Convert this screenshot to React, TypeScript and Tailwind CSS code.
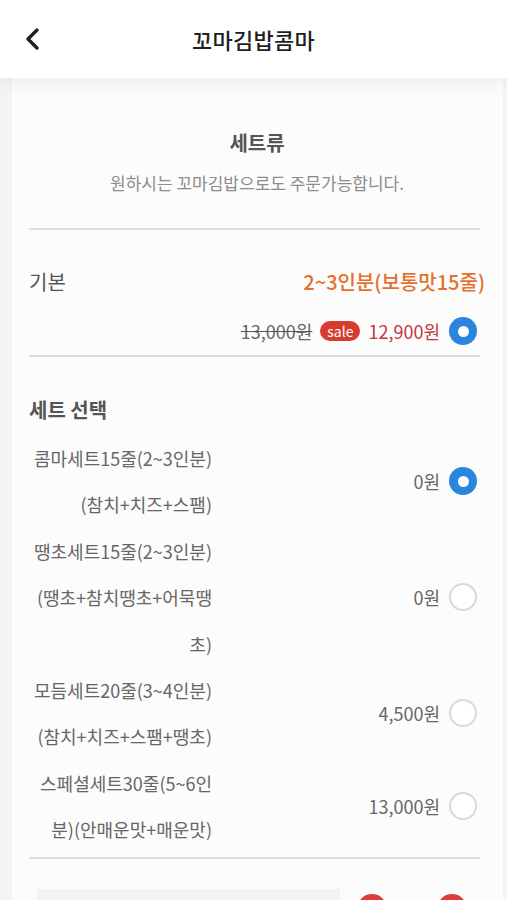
import React from "react";

type SetOption = {
  lines: string[];
  price: string;
  checked: boolean;
};

const SET_OPTIONS: SetOption[] = [
  { lines: ["콤마세트15줄(2~3인분)", "(참치+치즈+스팸)"], price: "0원", checked: true },
  { lines: ["땡초세트15줄(2~3인분)", "(땡초+참치땡초+어묵땡", "초)"], price: "0원", checked: false },
  { lines: ["모듬세트20줄(3~4인분)", "(참치+치즈+스팸+땡초)"], price: "4,500원", checked: false },
  { lines: ["스페셜세트30줄(5~6인", "분)(안매운맛+매운맛)"], price: "13,000원", checked: false },
];

function Radio({ checked }: { checked: boolean }) {
  return checked ? (
    <span className="flex h-[28px] w-[28px] shrink-0 items-center justify-center rounded-full bg-[#2a86dd]">
      <span className="block h-[11px] w-[11px] rounded-full bg-white" />
    </span>
  ) : (
    <span className="block h-[28px] w-[28px] shrink-0 rounded-full border-2 border-[#d5d9e1] bg-white" />
  );
}

export default function App() {
  return (
    <div className="min-h-screen overflow-hidden bg-[#f4f4f4] font-['Noto_Sans_CJK_KR','Noto_Sans',sans-serif]">
      {/* header */}
      <header className="relative z-10 grid h-[78px] grid-cols-[60px_1fr_60px] items-center bg-white shadow-[0_6px_16px_rgba(0,0,0,0.06)]">
        <div className="flex items-center pl-[24px]">
          <svg width="18" height="24" viewBox="0 0 18 24" fill="none">
            <path d="M13 3 L4 12 L13 21" stroke="#1f1f1f" strokeWidth="3.4" strokeLinecap="round" strokeLinejoin="round" />
          </svg>
        </div>
        <h1 className="text-center text-[22px] font-medium tracking-[0.3px] text-[#1f1f1f]">꼬마김밥콤마</h1>
        <div />
      </header>

      <main className="ml-[12px] mr-[4px] bg-[#fcfcfc] pl-[17px] pr-[18px] pt-[51px]">
        {/* intro */}
        <p className="text-center text-[20px] font-semibold leading-[28px] text-[#555]">세트류</p>
        <p className="mt-[13px] text-center text-[17px] leading-[26px] text-[#8c8c8c]">
          원하시는 꼬마김밥으로도 주문가능합니다.
        </p>
        <div className="mr-[5px] mt-[32px] h-[2px] bg-[#dedede]" />

        {/* base */}
        <div className="mt-[37px] flex items-center justify-between leading-[30px]">
          <span className="text-[20px] text-[#555]">기본</span>
          <span className="text-[20px] font-medium text-[#e4702c]">2~3인분(보통맛15줄)</span>
        </div>
        <div className="mr-[8px] mt-[19px] flex h-[30px] items-center justify-end">
          <span className="text-[18px] text-[#666] line-through decoration-[#555]">13,000원</span>
          <span className="ml-[8px] flex h-[20px] items-center rounded-full bg-[#d83a30] px-[7px] text-[14px] leading-none text-white">
            sale
          </span>
          <span className="ml-[8px] text-[18px] text-[#c6363f]">12,900원</span>
          <span className="ml-[9px] flex">
            <Radio checked />
          </span>
        </div>
        <div className="mr-[5px] mt-[9px] h-[2px] bg-[#dedede]" />

        {/* set options */}
        <p className="mt-[38px] text-[20px] font-semibold leading-[30px] text-[#555]">세트 선택</p>
        <ul className="mt-[10px]">
          {SET_OPTIONS.map((opt) => (
            <li key={opt.lines[0]} className="mr-[8px] flex items-center">
              <div className="w-[183px] text-right text-[18px] leading-[46.4px] text-[#666]">
                {opt.lines.map((l) => (
                  <div key={l} className="whitespace-nowrap">
                    {l}
                  </div>
                ))}
              </div>
              <span className="ml-auto text-[18px] text-[#666]">{opt.price}</span>
              <span className="ml-[9px] flex">
                <Radio checked={opt.checked} />
              </span>
            </li>
          ))}
        </ul>
        <div className="mr-[5px] mt-[4px] h-[2px] bg-[#dedede]" />

        {/* quantity row */}
        <div className="mt-[30px] flex items-start pl-[8px]">
          <div className="h-[40px] w-[303px] bg-[#f2f2f2]" />
          <div className="ml-auto mr-[18px] mt-[5px] flex gap-[50px]">
            <span className="block h-[30px] w-[30px] rounded-full bg-[#e03a3a]" />
            <span className="block h-[30px] w-[30px] rounded-full bg-[#e03a3a]" />
          </div>
        </div>
      </main>
    </div>
  );
}
